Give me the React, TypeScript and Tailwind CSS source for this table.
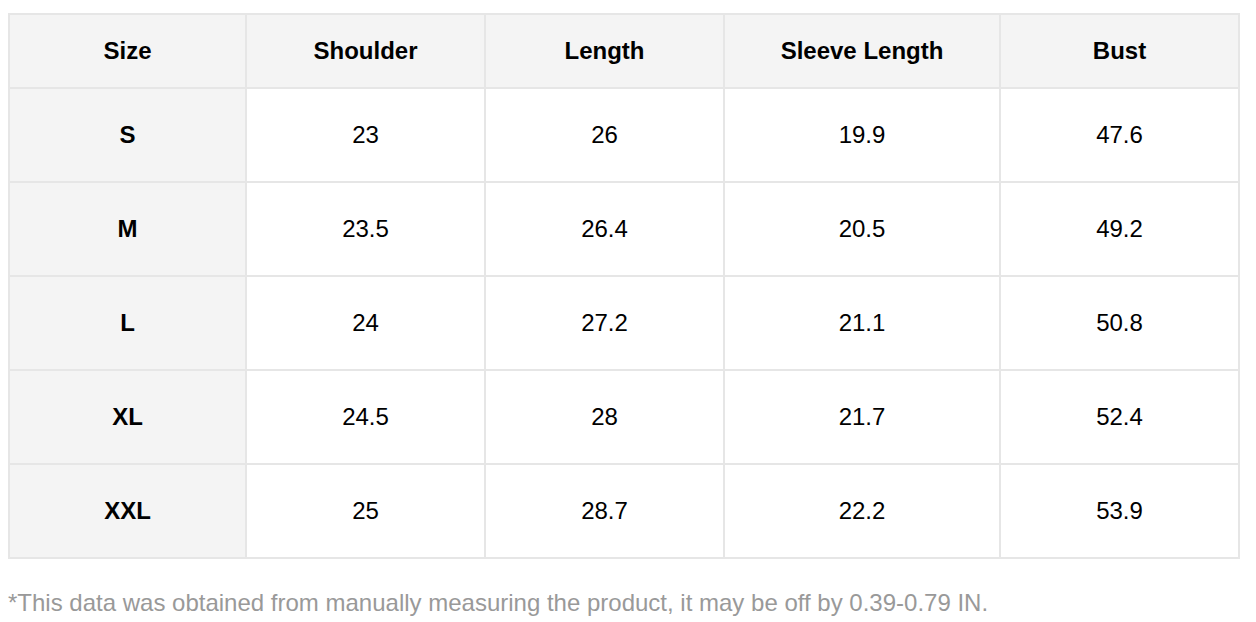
const headers = ["Size", "Shoulder", "Length", "Sleeve Length", "Bust"]

const rows = [
  ["S", "23", "26", "19.9", "47.6"],
  ["M", "23.5", "26.4", "20.5", "49.2"],
  ["L", "24", "27.2", "21.1", "50.8"],
  ["XL", "24.5", "28", "21.7", "52.4"],
  ["XXL", "25", "28.7", "22.2", "53.9"],
]

export default function App() {
  return (
    <div className="min-h-screen bg-white pl-2 pr-4 pt-[13px] font-['Liberation_Sans',Arial,sans-serif] text-black">
      {/* Size chart */}
      <div className="grid w-[1232px] grid-cols-[235px_237px_237px_274px_237px] gap-[2px] bg-[#e6e6e6] p-[2px]">
        {headers.map((h) => (
          <div
            key={h}
            className="flex h-[72px] items-center justify-center bg-[#f4f4f4] text-[24px] font-bold"
          >
            {h}
          </div>
        ))}
        {rows.map((row) =>
          row.map((cell, i) => (
            <div
              key={row[0] + i}
              className={
                i === 0
                  ? "flex h-[92px] items-center justify-center bg-[#f4f4f4] text-[24px] font-bold"
                  : "flex h-[92px] items-center justify-center bg-white text-[24px]"
              }
            >
              {cell}
            </div>
          ))
        )}
      </div>

      <p className="mt-[30px] text-[24px] leading-[28px] text-[#999999]">
        *This data was obtained from manually measuring the product, it may be off by 0.39-0.79 IN.
      </p>
    </div>
  )
}
